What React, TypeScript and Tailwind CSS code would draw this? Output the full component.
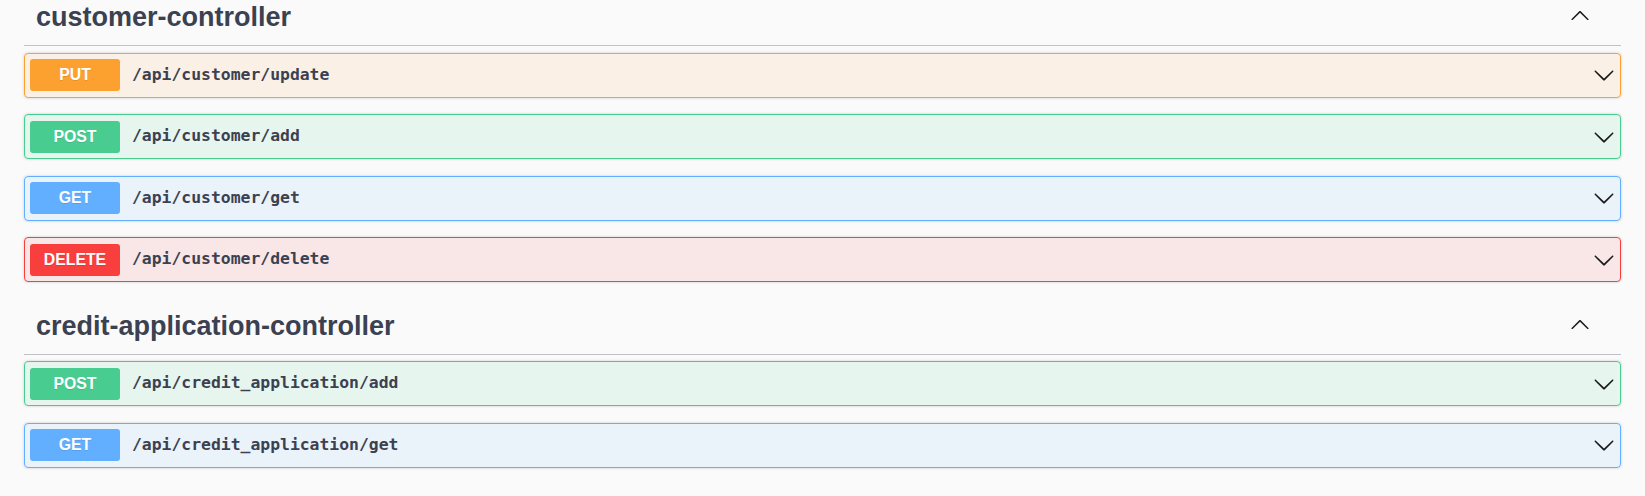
import React from 'react';

type Method = 'PUT' | 'POST' | 'GET' | 'DELETE';

interface Operation {
	method: Method;
	path: string;
}

interface Tag {
	name: string;
	operations: Operation[];
}

// swagger-ui method colours
const methodStyles: Record<Method, { row: string; badge: string }> = {
	PUT: { row: 'border-[#fca130] bg-[#fca130]/10', badge: 'bg-[#fca130]' },
	POST: { row: 'border-[#49cc90] bg-[#49cc90]/10', badge: 'bg-[#49cc90]' },
	GET: { row: 'border-[#61affe] bg-[#61affe]/10', badge: 'bg-[#61affe]' },
	DELETE: { row: 'border-[#f93e3e] bg-[#f93e3e]/10', badge: 'bg-[#f93e3e]' },
};

const tags: Tag[] = [
	{
		name: 'customer-controller',
		operations: [
			{ method: 'PUT', path: '/api/customer/update' },
			{ method: 'POST', path: '/api/customer/add' },
			{ method: 'GET', path: '/api/customer/get' },
			{ method: 'DELETE', path: '/api/customer/delete' },
		],
	},
	{
		name: 'credit-application-controller',
		operations: [
			{ method: 'POST', path: '/api/credit_application/add' },
			{ method: 'GET', path: '/api/credit_application/get' },
		],
	},
];

function ArrowDown({ size }: { size: number }) {
	return (
		<svg width={size} height={size} viewBox="0 0 20 20" fill="#1a1a1a">
			<path d="M17.418 6.109c.272-.268.709-.268.979 0s.271.701 0 .969l-7.908 7.83c-.27.268-.707.268-.979 0l-7.908-7.83c-.27-.268-.27-.701 0-.969.271-.268.709-.268.979 0L10 13.25l7.418-7.141z" />
		</svg>
	);
}

function ArrowUp({ size }: { size: number }) {
	return (
		<svg width={size} height={size} viewBox="0 0 20 20" fill="#1a1a1a">
			<path d="M17.418 14.908c.272.268.709.268.979 0s.271-.701 0-.969l-7.908-7.83c-.27-.268-.707-.268-.979 0l-7.908 7.83c-.27.268-.27.701 0 .969.271.268.709.268.979 0L10 7.767l7.418 7.141z" />
		</svg>
	);
}

function OperationRow({ op }: { op: Operation }) {
	const s = methodStyles[op.method];
	return (
		<div
			className={`mb-[16.5px] flex h-[45px] items-center rounded-[4px] border px-[5px] shadow-[0_0_3px_rgba(0,0,0,0.19)] ${s.row}`}
		>
			<span
				className={`flex h-[32px] w-[90px] shrink-0 items-center justify-center rounded-[3px] text-[15.8px] font-bold text-white [text-shadow:0_1px_0_rgba(0,0,0,0.1)] ${s.badge}`}
				style={{ fontFamily: '"Liberation Sans", Arial, sans-serif' }}
			>
				{op.method}
			</span>
			<span
				className="flex-1 px-[12px] text-[16.4px] font-bold text-[#3b4151]"
				style={{ fontFamily: '"DejaVu Sans Mono", "Liberation Mono", monospace' }}
			>
				{op.path}
			</span>
			<span className="flex shrink-0 items-center">
				<ArrowDown size={22} />
			</span>
		</div>
	);
}

function TagSection({ tag }: { tag: Tag }) {
	return (
		<section>
			{/* Tag header */}
			<div className="mb-[6.5px] flex h-[56px] items-center border-b border-[#3b4151]/30 pl-[12px] pr-[31px]">
				<h3
					className="flex-1 text-[27px] font-bold leading-none text-[#3b4151]"
					style={{ fontFamily: '"Liberation Sans", Arial, sans-serif' }}
				>
					{tag.name}
				</h3>
				<span className="mb-[5px] flex items-center">
					<ArrowUp size={20} />
				</span>
			</div>
			{tag.operations.map((op) => (
				<OperationRow key={op.method + op.path} op={op} />
			))}
		</section>
	);
}

export default function App() {
	return (
		<div className="h-[496px] w-full overflow-hidden bg-[#fafafa]">
			{/* page is scrolled a little, heading top is cut */}
			<div className="-mt-[10px] px-[24px]">
				{tags.map((tag) => (
					<TagSection key={tag.name} tag={tag} />
				))}
			</div>
		</div>
	);
}
